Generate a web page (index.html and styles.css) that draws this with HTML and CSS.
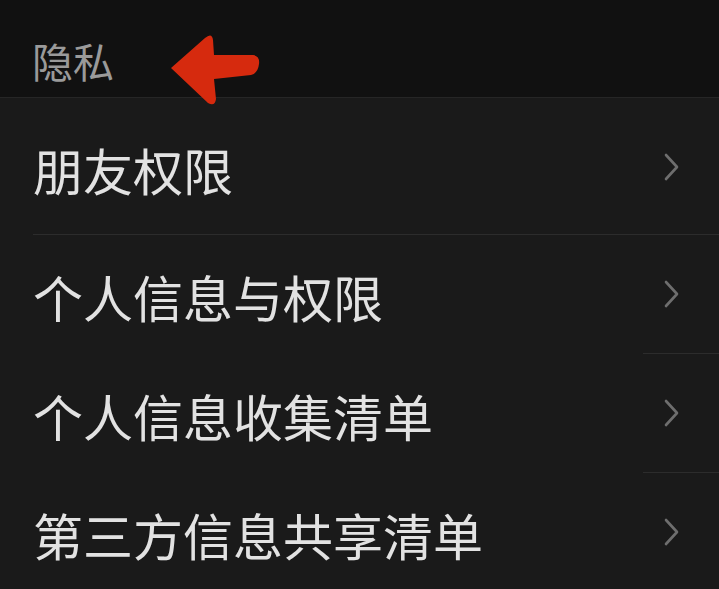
FILE: index.html
```html
<!DOCTYPE html>
<html lang="zh-CN">
<head>
<meta charset="utf-8">
<title>隐私</title>
<link rel="stylesheet" href="styles.css">
</head>
<body>
<div class="screen">
  <header class="header">
    <span class="header-title">隐私</span>
    <svg class="mark-arrow" width="100" height="80" viewBox="160 30 100 80" aria-hidden="true">
      <path d="M171,68 L205,38 Q212,32 213,40 L214,55 L253,55 Q260,56 259,64 Q258,73 251,75 L214,79 L216,99 Q215,107 208,103 Z" fill="#d62a0e"/>
    </svg>
  </header>
  <div class="list">
    <div class="row row-first">
      <span class="row-label">朋友权限</span>
      <svg class="chevron" width="16" height="28" viewBox="0 0 16 28" aria-hidden="true"><path d="M2,2 L13,14 L2,26" fill="none" stroke="#6e6e6e" stroke-width="2.6" stroke-linecap="round" stroke-linejoin="round"/></svg>
    </div>
    <div class="divider"></div>
    <div class="row">
      <span class="row-label">个人信息与权限</span>
      <svg class="chevron" width="16" height="28" viewBox="0 0 16 28" aria-hidden="true"><path d="M2,2 L13,14 L2,26" fill="none" stroke="#6e6e6e" stroke-width="2.6" stroke-linecap="round" stroke-linejoin="round"/></svg>
    </div>
    <div class="divider divider-short"></div>
    <div class="row">
      <span class="row-label">个人信息收集清单</span>
      <svg class="chevron" width="16" height="28" viewBox="0 0 16 28" aria-hidden="true"><path d="M2,2 L13,14 L2,26" fill="none" stroke="#6e6e6e" stroke-width="2.6" stroke-linecap="round" stroke-linejoin="round"/></svg>
    </div>
    <div class="divider divider-short"></div>
    <div class="row">
      <span class="row-label">第三方信息共享清单</span>
      <svg class="chevron" width="16" height="28" viewBox="0 0 16 28" aria-hidden="true"><path d="M2,2 L13,14 L2,26" fill="none" stroke="#6e6e6e" stroke-width="2.6" stroke-linecap="round" stroke-linejoin="round"/></svg>
    </div>
  </div>
</div>
</body>
</html>
```
FILE: styles.css
```css
html, body {
  margin: 0;
  padding: 0;
  background: #1a1a1a;
}
body {
  font-family: "Noto Sans CJK SC", "Noto Sans", sans-serif;
  overflow: hidden;
}
.screen {
  width: 719px;
  height: 589px;
  overflow: hidden;
}
.header {
  position: relative;
  height: 98px;
  box-sizing: border-box;
  padding: 40px 0 0 32px;
  background: #111111;
  border-bottom: 1px solid #262626;
}
.header-title {
  display: block;
  font-size: 41px;
  line-height: 40px;
  color: #9a9a9a;
}
.mark-arrow {
  position: absolute;
  left: 160px;
  top: 30px;
  z-index: 2;
}
.list {
  background: #1a1a1a;
}
.row {
  display: flex;
  align-items: center;
  justify-content: space-between;
  padding: 36px 39px 32px 33px;
}
.row-first {
  padding-top: 46px;
  padding-bottom: 40px;
}
.row-label {
  font-size: 50px;
  line-height: 50px;
  color: #e2e2e2;
}
.chevron {
  display: block;
  margin-top: -4px;
}
.divider {
  height: 1px;
  margin-left: 33px;
  background: #2c2c2c;
}
.divider-short {
  margin-left: 643px;
}
```
